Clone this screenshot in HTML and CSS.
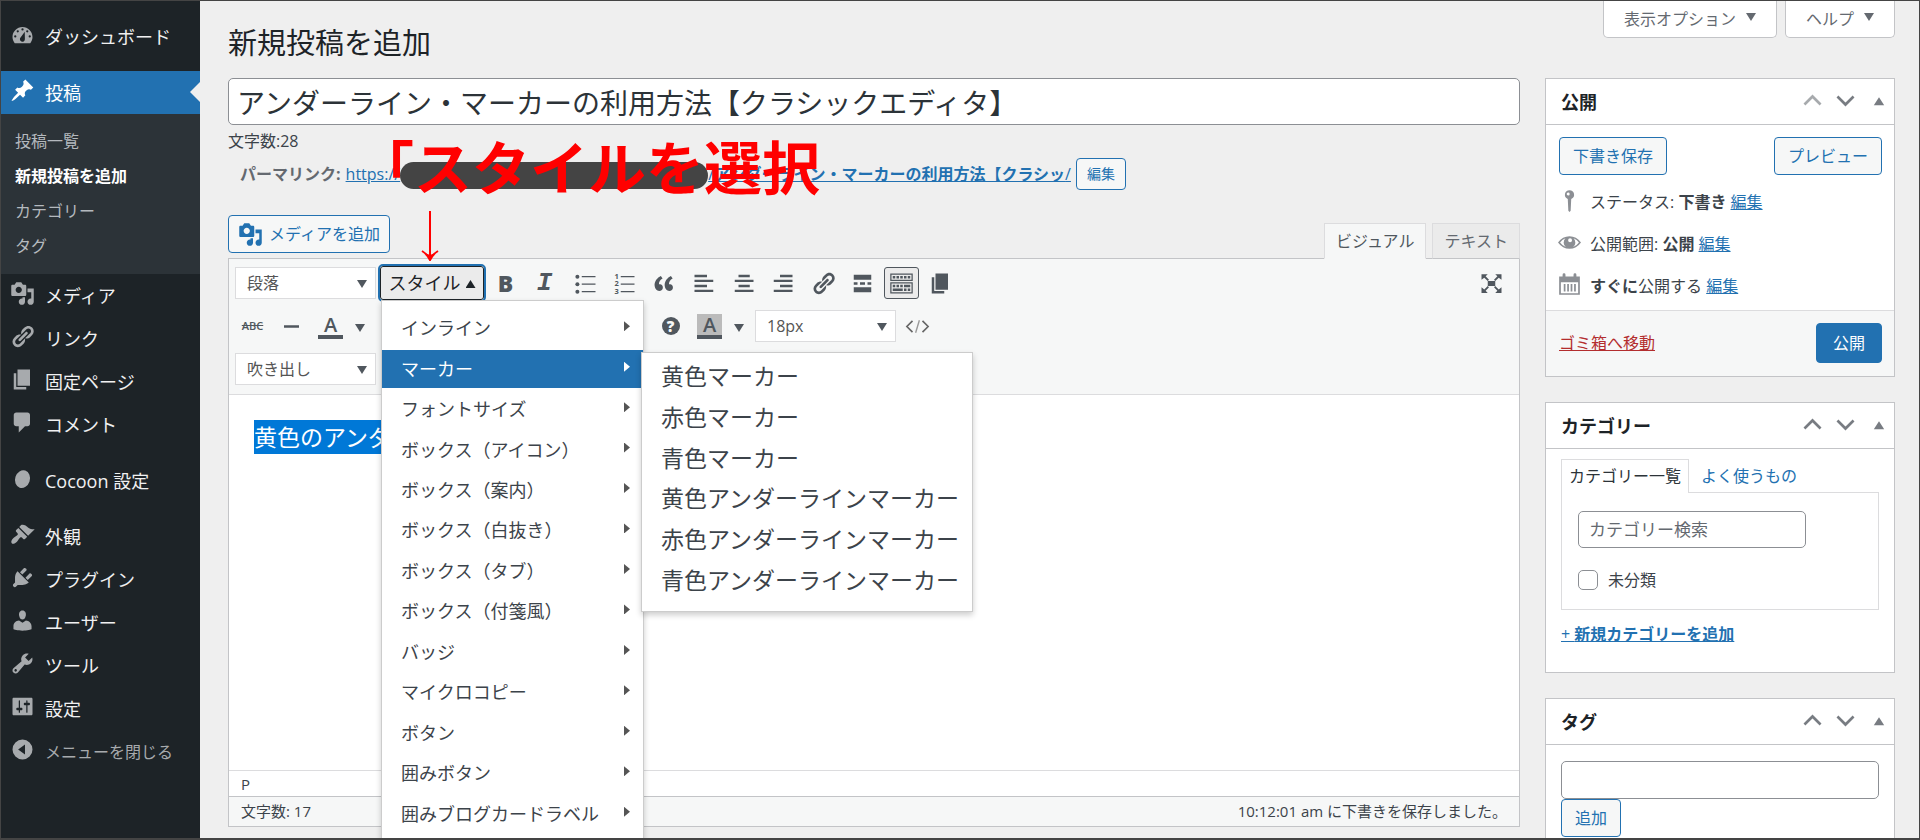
FILE: index.html
```html
<!DOCTYPE html>
<html lang="ja">
<head>
<meta charset="utf-8">
<title>新規投稿を追加</title>
<link rel="stylesheet" href="styles.css">
</head>
<body>
<svg class="defs" aria-hidden="true">
  <defs>
    <symbol id="i-media" viewBox="0 0 20 20"><path d="M13 11V4c0-.55-.45-1-1-1h-1.67L9 1H5L3.67 3H2c-.55 0-1 .45-1 1v7c0 .55.45 1 1 1h10c.55 0 1-.45 1-1zM7 4.5c1.38 0 2.5 1.12 2.5 2.5S8.38 9.5 7 9.5 4.5 8.38 4.5 7 5.62 4.5 7 4.5zM14 6h5v10.5c0 1.38-1.12 2.5-2.5 2.5S14 17.88 14 16.5s1.12-2.5 2.5-2.5c.17 0 .34.02.5.05V9h-3V6zm-4 8.05V13h2v3.5c0 1.38-1.12 2.5-2.5 2.5S7 17.88 7 16.5 8.12 14 9.5 14c.17 0 .34.02.5.05z"/></symbol>
    <symbol id="i-link" viewBox="0 0 20 20"><path d="M17.74 2.76c1.68 1.69 1.68 4.41 0 6.1l-1.53 1.52c-1.12 1.12-2.7 1.47-4.14 1.09l2.62-2.61.76-.77.76-.76c.84-.84.84-2.2 0-3.04-.84-.85-2.2-.85-3.04 0l-.77.76-3.38 3.38c-.37-1.44-.02-3.02 1.1-4.14l1.52-1.53c1.69-1.68 4.42-1.68 6.1 0zM8.59 13.43l5.34-5.34c.42-.42.42-1.1 0-1.52-.44-.43-1.13-.39-1.53 0l-5.33 5.34c-.42.42-.42 1.1 0 1.52.44.43 1.13.39 1.52 0zm-.76 2.29l4.14-4.15c.38 1.44.03 3.02-1.09 4.14l-1.52 1.53c-1.69 1.68-4.41 1.68-6.1 0-1.68-1.68-1.68-4.42 0-6.1l1.53-1.52c1.12-1.12 2.7-1.47 4.14-1.1l-4.14 4.15c-.85.84-.85 2.2 0 3.05.84.84 2.2.84 3.04 0z"/></symbol>
    <symbol id="i-page" viewBox="0 0 20 20"><path d="M6 15V2h10v13H6zm-1 1h8v2H3V5h2v11z"/></symbol>
    <symbol id="i-up" viewBox="0 0 20 20"><path d="M3 13.500l7-7 7 7" fill="none" stroke="currentColor" stroke-width="2.300"/></symbol>
    <symbol id="i-down" viewBox="0 0 20 20"><path d="M3 6.500l7 7 7-7" fill="none" stroke="currentColor" stroke-width="2.300"/></symbol>
    <symbol id="i-tri" viewBox="0 0 20 20"><path d="M3.500 16l6.500-10 6.500 10z"/></symbol>
  </defs>
</svg>
<div class="frame">
  <nav class="sidebar">
    <a class="nav-item" href="#"><svg class="icon" viewBox="0 0 20 20"><path fill-rule="evenodd" d="M3.800 17h12.400C17.300 15.600 18 13.900 18 12c0-4.400-3.600-8-8-8s-8 3.600-8 8c0 1.900.7 3.600 1.800 5zM10 5a.9.9 0 0 1 0 1.800.9.900 0 0 1 0-1.800zM6.200 6.500a.9.900 0 0 1 0 1.800.9.900 0 0 1 0-1.800zM13.800 6.500a.9.900 0 0 1 0 1.800.9.900 0 0 1 0-1.800zM4.200 10.600a.9.900 0 0 1 0 1.800.9.900 0 0 1 0-1.800zM15.800 10.600a.9.900 0 0 1 0 1.800.9.900 0 0 1 0-1.800zM11.800 7.800L11.900 13.500A2 2 0 1 1 8.600 12.200z"/></svg>ダッシュボード</a>
    <a class="nav-item current gap-before" href="#"><svg class="icon" viewBox="0 0 20 20"><path d="M10.440 3.020l1.820-1.820 6.360 6.350-1.830 1.820c-1.050-.68-2.480-.57-3.410.36l-.75.75c-.92.93-1.040 2.350-.35 3.410l-1.830 1.820-2.410-2.410-2.800 2.790c-.42.42-3.380 2.710-3.800 2.290s1.860-3.390 2.280-3.810l2.790-2.790L4.100 9.360l1.830-1.820c1.050.69 2.480.57 3.400-.36l.75-.75c.93-.92 1.050-2.350.36-3.410z"/></svg>投稿</a>
    <div class="subnav">
      <a href="#">投稿一覧</a>
      <a class="active" href="#">新規投稿を追加</a>
      <a href="#">カテゴリー</a>
      <a href="#">タグ</a>
    </div>
    <a class="nav-item" href="#"><svg class="icon"><use href="#i-media"/></svg>メディア</a>
    <a class="nav-item" href="#"><svg class="icon"><use href="#i-link"/></svg>リンク</a>
    <a class="nav-item" href="#"><svg class="icon"><use href="#i-page"/></svg>固定ページ</a>
    <a class="nav-item" href="#"><svg class="icon" viewBox="0 0 20 20"><path d="M5 2h9c1.100 0 2 .9 2 2v7c0 1.100-.9 2-2 2h-2l-5 5v-5H5c-1.100 0-2-.9-2-2V4c0-1.100.9-2 2-2z"/></svg>コメント</a>
    <a class="nav-item gap-before" href="#"><svg class="icon" viewBox="0 0 20 20"><ellipse cx="10" cy="10.500" rx="5.900" ry="7.200" transform="rotate(18 10 10.500)"/></svg>Cocoon 設定</a>
    <a class="nav-item gap-before" href="#"><svg class="icon" viewBox="0 0 20 20"><path d="M14.480 11.060L7.410 3.990l1.500-1.500c.5-.56 2.300-.47 3.510.32 1.210.8 1.430 1.280 2.910 2.100 1.180.64 2.450 1.260 4.450.85zm-.71.71L6.700 4.700 4.930 6.470c-.39.39-.39 1.020 0 1.410l1.060 1.060c.39.39.39 1.030 0 1.420-.6.6-1.430 1.110-2.210 1.690-.35.26-.7.53-1.010.84C1.430 14.230.4 16.080 1.400 17.070c.99 1 2.840-.03 4.180-1.360.31-.31.58-.66.85-1.020.57-.78 1.080-1.610 1.690-2.210.39-.39 1.020-.39 1.410 0l1.060 1.060c.39.39 1.020.39 1.410 0z"/></svg>外観</a>
    <a class="nav-item" href="#"><svg class="icon" viewBox="0 0 20 20"><path d="M13.110 4.360L9.870 7.600 8 5.730l3.240-3.240c.35-.34 1.050-.2 1.560.32.52.51.66 1.210.31 1.550zm-8 1.770l.91-1.120 9.010 9.010-1.190.84c-.71.71-2.630 1.160-3.820 1.160H6.140L4.900 17.260c-.59.59-1.540.59-2.120 0-.59-.58-.59-1.530 0-2.120l1.240-1.240v-3.880c0-1.130.4-3.190 1.090-3.890zm7.260 3.970l3.240-3.240c.34-.35 1.040-.21 1.550.31.52.51.66 1.210.31 1.550l-3.240 3.250z"/></svg>プラグイン</a>
    <a class="nav-item" href="#"><svg class="icon" viewBox="0 0 20 20"><path d="M10 9.250c-2.270 0-2.730-3.440-2.730-3.440C7 4.020 7.820 2 9.970 2c2.160 0 2.980 2.020 2.710 3.810 0 0-.41 3.440-2.680 3.440zm0 2.570L12.720 10c2.390 0 4.520 2.330 4.520 4.530v2.490s-3.650 1.130-7.240 1.130c-3.650 0-7.240-1.130-7.240-1.130v-2.490c0-2.250 1.940-4.480 4.470-4.480z"/></svg>ユーザー</a>
    <a class="nav-item" href="#"><svg class="icon" viewBox="0 0 20 20"><path d="M16.680 9.770c-1.340 1.340-3.300 1.670-4.950.99l-5.410 6.520c-.99.99-2.590.99-3.580 0s-.99-2.590 0-3.570l6.520-5.420c-.68-1.650-.35-3.610.99-4.950 1.280-1.280 3.120-1.620 4.720-1.060l-2.890 2.890 2.820 2.820 2.860-2.870c.53 1.580.18 3.390-1.080 4.650zM3.810 16.210c.4.39 1.040.39 1.430 0 .4-.4.4-1.040 0-1.430-.39-.4-1.030-.4-1.430 0-.39.39-.39 1.030 0 1.430z"/></svg>ツール</a>
    <a class="nav-item" href="#"><svg class="icon" viewBox="0 0 20 20"><path d="M18 16V4c0-.55-.45-1-1-1H3c-.55 0-1 .45-1 1v12c0 .55.45 1 1 1h14c.55 0 1-.45 1-1zM8 11h1c.55 0 1 .45 1 1s-.45 1-1 1H8v1.500c0 .28-.22.5-.5.5s-.5-.22-.5-.5V13H6c-.55 0-1-.45-1-1s.45-1 1-1h1V5.500c0-.28.22-.5.5-.5s.5.22.5.5V11zm5-2h-1c-.55 0-1-.45-1-1s.45-1 1-1h1V5.500c0-.28.22-.5.5-.5s.5.22.5.5V7h1c.55 0 1 .45 1 1s-.45 1-1 1h-1v5.500c0 .28-.22.5-.5.5s-.5-.22-.5-.5V9z"/></svg>設定</a>
    <button class="nav-item collapse" type="button"><svg class="icon" viewBox="0 0 20 20"><path fill-rule="evenodd" d="M10 2a8 8 0 1 0 0 16 8 8 0 0 0 0-16zM12 6v8L6.500 10z"/></svg>メニューを閉じる</button>
  </nav>

  <div class="page">
    <header class="page-head">
      <h1>新規投稿を追加</h1>
      <div class="screen-meta">
        <button type="button">表示オプション<i class="caret"></i></button>
        <button type="button">ヘルプ<i class="caret"></i></button>
      </div>
    </header>

    <div class="columns">
      <main class="main">
        <input class="title-input" type="text" aria-label="タイトル" value="アンダーライン・マーカーの利用方法【クラシックエディタ】">
        <p class="title-count">文字数:28</p>
        <div class="permalink">
          <b>パーマリンク:</b>
          <a href="#">https://<span class="masked"></span>/<b>アンダーライン・マーカーの利用方法【クラシッ</b>/</a>
          <button class="btn small" type="button">編集</button>
          <div class="callout">「スタイルを選択
            <svg class="callout-arrow" viewBox="0 0 18 50"><path d="M9 0V48M1 40Q6 43 9 49Q12 43 17 40" fill="none" stroke="#f00" stroke-width="2"/><path d="M4 42l5 2 5-2-5 8z" fill="#f00"/></svg>
          </div>
        </div>
        <div class="editor-tools">
          <button class="btn media" type="button"><svg class="icon"><use href="#i-media"/></svg>メディアを追加</button>
          <div class="tabs">
            <button class="tab on" type="button">ビジュアル</button>
            <button class="tab" type="button">テキスト</button>
          </div>
        </div>

        <div class="editor">
          <div class="toolbar">
            <div class="row">
              <div class="group">
                <span class="pick"><select aria-label="段落"><option>段落</option></select></span>
                <div class="style-wrap">
                  <button class="style-btn" type="button">スタイル<i class="caret up"></i></button>
                  <div class="menu">
                    <button type="button">インライン</button>
                    <button class="hover" type="button">マーカー</button>
                    <button type="button">フォントサイズ</button>
                    <button type="button">ボックス（アイコン）</button>
                    <button type="button">ボックス（案内）</button>
                    <button type="button">ボックス（白抜き）</button>
                    <button type="button">ボックス（タブ）</button>
                    <button type="button">ボックス（付箋風）</button>
                    <button type="button">バッジ</button>
                    <button type="button">マイクロコピー</button>
                    <button type="button">ボタン</button>
                    <button type="button">囲みボタン</button>
                    <button type="button">囲みブログカードラベル</button>
                  </div>
                  <div class="submenu">
                    <button type="button">黄色マーカー</button>
                    <button type="button">赤色マーカー</button>
                    <button type="button">青色マーカー</button>
                    <button type="button">黄色アンダーラインマーカー</button>
                    <button type="button">赤色アンダーラインマーカー</button>
                    <button type="button">青色アンダーラインマーカー</button>
                  </div>
                </div>
                <button class="tool bold" type="button">B</button>
                <button class="tool italic" type="button">I</button>
              </div>
              <div class="group">
                <button class="tool" type="button" aria-label="箇条書き"><svg class="icon" viewBox="0 0 20 20"><circle cx="3.500" cy="4.500" r="1.600"/><circle cx="3.500" cy="10.500" r="1.600"/><circle cx="3.500" cy="16.500" r="1.600"/><path d="M7 4h11v1H7zM7 10h11v1H7zM7 16h11v1H7z"/></svg></button>
                <button class="tool" type="button" aria-label="番号付き"><svg class="icon" viewBox="0 0 20 20"><path d="M7 4h11v1H7zM7 10h11v1H7zM7 16h11v1H7z"/><text class="num" x="2" y="6">1</text><text class="num" x="2" y="12">2</text><text class="num" x="2" y="18">3</text></svg></button>
                <button class="tool" type="button" aria-label="引用"><svg class="icon" viewBox="0 0 20 20"><path d="M9.490 13.220c0-.74-.2-1.380-.61-1.900-.62-.78-1.830-.88-2.530-.72-.29-1.650 1.110-3.750 2.920-4.650L7.880 4c-2.730 1.300-5.420 4.280-4.960 8.050C3.210 14.430 4.590 16 6.540 16c.85 0 1.560-.25 2.120-.75s.83-1.180.83-2.030zm8.050 0c0-.74-.2-1.380-.61-1.900-.63-.78-1.830-.88-2.530-.72-.29-1.650 1.110-3.750 2.920-4.650L15.930 4c-2.730 1.300-5.410 4.280-4.950 8.050.29 2.380 1.660 3.950 3.610 3.950.85 0 1.560-.25 2.120-.75s.83-1.180.83-2.030z"/></svg></button>
              </div>
              <div class="group">
                <button class="tool" type="button" aria-label="左寄せ"><svg class="icon" viewBox="0 0 20 20"><path d="M2 3h10v2H2zM2 7h15v1.800H2zM2 11h10v2H2zM2 15h15v1.800H2z"/></svg></button>
                <button class="tool" type="button" aria-label="中央寄せ"><svg class="icon" viewBox="0 0 20 20"><path d="M6 3h9v2H6zM3 7h15v1.800H3zM6 11h9v2H6zM3 15h15v1.800H3z"/></svg></button>
                <button class="tool" type="button" aria-label="右寄せ"><svg class="icon" viewBox="0 0 20 20"><path d="M8 3h10v2H8zM3 7h15v1.800H3zM8 11h10v2H8zM3 15h15v1.800H3z"/></svg></button>
              </div>
              <div class="group">
                <button class="tool" type="button" aria-label="リンク"><svg class="icon"><use href="#i-link"/></svg></button>
                <button class="tool" type="button" aria-label="続きを読む"><svg class="icon" viewBox="0 0 20 20"><path d="M17 7V3H3v4h14zM6 11V9H3v2h3zm6 0V9H8v2h4zm5 0V9h-3v2h3zm0 6v-4H3v4h14z"/></svg></button>
                <button class="tool pressed" type="button" aria-label="ツールバー切り替え"><svg class="icon" viewBox="0 0 20 20"><path d="M19 2v6H1V2h18zm-1 5V3H2v4h16zM5 4v2H3V4h2zm3 0v2H6V4h2zm3 0v2H9V4h2zm3 0v2h-2V4h2zm3 0v2h-2V4h2zm2 5v9H1V9h18zm-1 8v-7H2v7h16zM5 11v2H3v-2h2zm3 0v2H6v-2h2zm3 0v2H9v-2h2zm6 0v2h-5v-2h5zm-6 3v2H3v-2h8zm3 0v2h-2v-2h2zm3 0v2h-2v-2h2z"/></svg></button>
                <button class="tool" type="button" aria-label="ページ"><svg class="icon"><use href="#i-page"/></svg></button>
              </div>
              <button class="tool expand" type="button" aria-label="集中執筆モード"><svg class="icon" viewBox="0 0 20 20"><path d="M7 8h6v4H7zM2 2.500h5L5.300 4.200 8 7 7 8 4.200 5.300 2 7zM18 2.500h-5l1.700 1.700L12 7l1 1 2.800-2.700L18 7zM2 17.500h5l-1.700-1.700L8 13l-1-1-2.800 2.700L2 13zM18 17.500h-5l1.700-1.700L12 13l1-1 2.800 2.700L18 13z"/></svg></button>
            </div>

            <div class="row">
              <div class="group">
                <button class="tool strike" type="button">ABC</button>
                <button class="tool" type="button" aria-label="横線"><svg class="icon" viewBox="0 0 20 20"><path d="M4 9h12v2H4z"/></svg></button>
                <span class="split"><button class="tool" type="button"><span class="swatch">A</span></button><button class="more" type="button" aria-label="文字色"><i class="caret"></i></button></span>
              </div>
              <div class="group">
                <button class="tool" type="button" aria-label="貼り付け"></button>
                <button class="tool" type="button" aria-label="書式設定をクリア"></button>
                <button class="tool" type="button" aria-label="特殊文字"></button>
                <button class="tool" type="button" aria-label="インデントを減らす"></button>
                <button class="tool" type="button" aria-label="インデントを増やす"></button>
                <button class="tool" type="button" aria-label="取り消し"></button>
                <button class="tool" type="button" aria-label="やり直し"></button>
              </div>
              <div class="group">
                <button class="tool" type="button"><span class="help">?</span></button>
                <span class="split"><button class="tool" type="button"><span class="swatch back">A</span></button><button class="more" type="button" aria-label="背景色"><i class="caret"></i></button></span>
                <span class="pick"><select aria-label="フォントサイズ"><option>18px</option></select></span>
                <button class="tool" type="button" aria-label="コード"><svg class="icon" viewBox="0 0 20 20"><path d="M6 5.500L1.500 10 6 14.500M14 5.500l4.500 4.500-4.500 4.500" fill="none" stroke="#666" stroke-width="1.300"/><path d="M11.500 5l-3 10" fill="none" stroke="#999" stroke-width="1.100"/></svg></button>
              </div>
            </div>

            <div class="row">
              <span class="pick"><select aria-label="吹き出し"><option>吹き出し</option></select></span>
            </div>
          </div>
          <div class="canvas"><p><mark>黄色のアンダーラインマーカーです。</mark></p></div>
          <div class="path">P</div>
          <div class="status"><span>文字数: 17</span><span>10:12:01 am に下書きを保存しました。</span></div>
        </div>
      </main>

      <aside class="side">
        <section class="box">
          <div class="box-head"><h2>公開</h2><span class="order"><svg class="dim"><use href="#i-up"/></svg><svg><use href="#i-down"/></svg><svg><use href="#i-tri"/></svg></span></div>
          <div class="publish">
            <div class="between"><button class="btn" type="button">下書き保存</button><button class="btn" type="button">プレビュー</button></div>
            <p><svg class="icon" viewBox="0 0 20 20"><path fill-rule="evenodd" d="M10 1a4 4 0 0 1 1.500 7.700L11 19l-1 1-1-1-.5-10.300A4 4 0 0 1 10 1zM8.800 3a1.300 1.300 0 1 0 .1 2.600A1.300 1.300 0 0 0 8.800 3z"/></svg><span>ステータス: <b>下書き</b> <a href="#">編集</a></span></p>
            <p><svg class="icon" viewBox="0 0 20 20"><path fill-rule="evenodd" d="M0 10Q4 4.500 10 4.500T20 10Q16 15.500 10 15.500T0 10zM1.800 10Q4 13 6.800 13.900A5 5 0 0 1 6.500 6.300Q3.500 7.500 1.800 10zM18.200 10Q16.500 7.500 13.500 6.300A5 5 0 0 1 13.200 13.900Q16 13 18.200 10zM10.500 6.300a1.700 1.700 0 1 0 1.700 1.700 1.700 1.700 0 0 0-1.700-1.700z"/></svg><span>公開範囲: <b>公開</b> <a href="#">編集</a></span></p>
            <p><svg class="icon" viewBox="0 0 20 20"><path fill-rule="evenodd" d="M1 3h3V1.500a1 1 0 0 1 2.500 0V3h7V1.500a1 1 0 0 1 2.500 0V3h3v16H1zM2.500 8v9.500h15V8zM5 9.500h1.500V16H5zM8 9.500h1.500V16H8zM11 9.500h1.500V16H11zM14 9.500h1.500V16H14z"/></svg><span><b>すぐに</b>公開する <a href="#">編集</a></span></p>
          </div>
          <div class="publish-foot"><a href="#">ゴミ箱へ移動</a><button class="btn primary" type="button">公開</button></div>
        </section>

        <section class="box">
          <div class="box-head"><h2>カテゴリー</h2><span class="order"><svg><use href="#i-up"/></svg><svg><use href="#i-down"/></svg><svg><use href="#i-tri"/></svg></span></div>
          <div class="category">
            <div class="cat-tabs"><a class="on" href="#">カテゴリー一覧</a><a href="#">よく使うもの</a></div>
            <div class="cat-panel">
              <input class="field" type="text" aria-label="カテゴリー検索" placeholder="カテゴリー検索">
              <label><input type="checkbox">未分類</label>
            </div>
            <a class="add-cat" href="#">+ <b>新規カテゴリーを追加</b></a>
          </div>
        </section>

        <section class="box">
          <div class="box-head"><h2>タグ</h2><span class="order"><svg><use href="#i-up"/></svg><svg><use href="#i-down"/></svg><svg><use href="#i-tri"/></svg></span></div>
          <div class="tags">
            <input class="field" type="text" aria-label="タグ">
            <button class="btn" type="button">追加</button>
          </div>
        </section>
      </aside>
    </div>
  </div>
</div>
</body>
</html>
```

FILE: styles.css
```css
* { box-sizing: border-box; }

body {
  margin: 0;
  font: 16px/24px "Open Sans", "Noto Sans CJK JP", sans-serif;
  color: #3c434a;
  background: #f0f0f1;
}

button, input, select { font: inherit; color: inherit; margin: 0; }
button { padding: 0; border: 0; background: none; white-space: nowrap; }
h1, h2, p { margin: 0; }
a { color: #2271b1; }
svg { fill: currentColor; }
.defs { display: block; width: 0; height: 0; position: absolute; }
.icon { width: 25px; height: 25px; flex: none; }

.caret {
  display: inline-block;
  width: 10px;
  height: 8px;
  background: currentColor;
  clip-path: polygon(0 0, 100% 0, 50% 100%);
}
.caret.up { clip-path: polygon(50% 0, 100% 100%, 0 100%); }

.frame {
  display: flex;
  height: 100vh;
  overflow: hidden;
  border: 1px solid #444;
  border-bottom-width: 2px;
  background: #efefef;
}

/* Admin menu */
.sidebar {
  flex: none;
  width: 199px;
  padding-top: 14px;
  background: #1d2327;
}
.nav-item {
  display: flex;
  align-items: center;
  gap: 10px;
  width: 100%;
  height: 43px;
  padding-left: 9px;
  font-size: 18px;
  color: #f0f0f1;
  text-decoration: none;
}
.nav-item .icon { color: #a7aaad; margin-bottom: 4px; }
.gap-before { margin-top: 13px; }
.nav-item.current { position: relative; background: #2271b1; color: #fff; }
.nav-item.current .icon { color: #fff; }
.nav-item.current::after {
  content: "";
  position: absolute;
  right: 0;
  top: 11px;
  width: 10px;
  height: 20px;
  background: #efefef;
  clip-path: polygon(100% 0, 100% 100%, 0 50%);
}
.subnav { padding: 10px 0; background: #2c3338; }
.subnav a {
  display: block;
  padding-left: 14px;
  line-height: 35px;
  color: #b4b9be;
  text-decoration: none;
}
.subnav a.active { color: #fff; font-weight: 700; }
.nav-item.collapse { font-size: 16px; color: #a7aaad; }

/* Page */
.page { flex: 1; min-width: 0; padding: 0 24px 0 28px; }
.page-head { display: flex; justify-content: space-between; height: 77px; }
h1 {
  padding-top: 22px;
  font-size: 29px;
  line-height: 40px;
  font-weight: 400;
  color: #1d2327;
}
.screen-meta { display: flex; gap: 8px; align-items: flex-start; }
.screen-meta button {
  height: 37px;
  padding: 0 20px;
  border: 1px solid #c3c4c7;
  border-top: 0;
  border-radius: 0 0 5px 5px;
  background: #fff;
  color: #646970;
}
.screen-meta .caret { margin: 0 0 4px 10px; }
.columns { display: flex; gap: 25px; }
.main { flex: 1; min-width: 0; }
.side { flex: none; width: 350px; display: flex; flex-direction: column; gap: 25px; }

.btn {
  height: 38px;
  padding: 0 13px;
  border: 1px solid #2271b1;
  border-radius: 4px;
  background: #f6f7f7;
  color: #2271b1;
}
.btn.small { height: 32px; padding: 0 10px; font-size: 14px; }
.btn.primary { height: 40px; padding: 0 16px; background: #2271b1; color: #fff; }

.title-input {
  display: block;
  width: 100%;
  height: 47px;
  padding: 0 8px;
  border: 1px solid #8c8f94;
  border-radius: 5px;
  background: #fff;
  font-size: 28px;
  color: #2c3338;
}
.title-count { padding-top: 4px; }
.permalink {
  position: relative;
  display: flex;
  align-items: center;
  gap: 5px;
  height: 32px;
  margin-top: 5px;
  padding-left: 12px;
  color: #646970;
  white-space: nowrap;
}
.masked {
  display: inline-block;
  width: 308px;
  height: 27px;
  margin: -4px 0;
  border-radius: 14px;
  background: #444;
  vertical-align: middle;
}
.callout {
  position: absolute;
  left: 128px;
  top: -20px;
  font-size: 58px;
  line-height: 60px;
  font-weight: 700;
  color: #f00;
}
.callout-arrow { position: absolute; left: 65px; top: 73px; width: 18px; height: 50px; }

.editor-tools { display: flex; justify-content: space-between; align-items: flex-start; padding-top: 25px; }
.btn.media { display: flex; align-items: center; gap: 6px; padding: 0 9px; margin-bottom: 5px; }
.tabs { display: flex; gap: 6px; align-self: flex-end; position: relative; }
.tab {
  height: 36px;
  padding: 0 11px;
  border: 1px solid #dcdcde;
  border-bottom-color: #c3c4c7;
  background: #ebebeb;
  color: #646970;
  margin-bottom: -1px;
}
.tab.on { background: #f6f7f7; border-bottom-color: #f6f7f7; color: #50575e; }

/* Editor */
.editor { border: 1px solid #c3c4c7; }
.toolbar {
  display: flex;
  flex-direction: column;
  gap: 11px;
  padding: 8px 6px;
  border-bottom: 1px solid #dcdcde;
  background: #f6f7f7;
  color: #50575e;
}
.row { display: flex; align-items: center; gap: 6px; height: 32px; }
.row:last-child { margin-bottom: 1px; }
.group { display: flex; align-items: center; gap: 4px; }
.pick { position: relative; display: block; }
.pick select {
  display: block;
  appearance: none;
  width: 141px;
  height: 32px;
  padding: 0 11px;
  border: 1px solid #dcdcde;
  border-radius: 0;
  background: #fff;
  color: #555;
}
.pick::after {
  content: "";
  position: absolute;
  right: 9px;
  top: 13px;
  width: 10px;
  height: 8px;
  background: #50575e;
  clip-path: polygon(0 0, 100% 0, 50% 100%);
  pointer-events: none;
}
.tool {
  display: flex;
  align-items: center;
  justify-content: center;
  width: 35px;
  height: 32px;
}
.tool.pressed { border: 1px solid #50575e; border-radius: 3px; background: #ebebeb; }
.bold { font-size: 23px; font-weight: 800; }
.italic { font: italic 700 26px "Liberation Mono", monospace; }
.num { font: 700 6px "Open Sans", sans-serif; }
.expand { margin: 0 4px 0 auto; }
.strike { font-size: 11px; font-weight: 600; text-decoration: line-through; }
.split { display: flex; }
.more { width: 24px; }
.swatch {
  width: 25px;
  height: 25px;
  border-bottom: 4px solid #50575e;
  font-size: 20px;
  line-height: 21px;
  font-weight: 600;
}
.swatch.back { background: #bbb; }
.help {
  width: 18px;
  height: 18px;
  border-radius: 9px;
  background: #50575e;
  color: #f6f7f7;
  font-size: 15px;
  line-height: 18px;
  font-weight: 800;
}

.style-wrap { position: relative; z-index: 2; }
.style-btn {
  width: 104px;
  height: 34px;
  border: 1px solid #1d2327;
  border-radius: 3px;
  outline: 2px solid #2271b1;
  background: #ebebeb;
  font-size: 18px;
  color: #1d2327;
}
.style-btn .caret { margin: 0 0 2px 5px; }
.menu, .submenu {
  position: absolute;
  display: grid;
  align-items: center;
  border: 1px solid #ccc;
  background: #fff;
  box-shadow: 0 3px 6px #0003;
}
.menu { left: 1px; top: 34px; width: 263px; height: 554px; padding: 7px 0 19px; }
.menu button {
  position: relative;
  height: 38px;
  padding-left: 19px;
  text-align: left;
  font-size: 18px;
  color: #3c434a;
}
.menu button::after {
  content: "";
  position: absolute;
  right: 13px;
  top: 12px;
  width: 6px;
  height: 10px;
  background: #555;
  clip-path: polygon(0 0, 100% 50%, 0 100%);
}
.menu .hover { background: #2271b1; color: #fff; }
.menu .hover::after { background: #fff; }
.submenu { left: 261px; top: 86px; width: 332px; height: 260px; padding: 3px 0 11px; }
.submenu button { padding-left: 19px; text-align: left; font-size: 23px; line-height: 38px; color: #3c434a; }

.canvas { height: 375px; padding: 25px; background: #fff; font-size: 23px; line-height: 34px; }
.canvas mark { display: inline-block; background: #0078d7; color: #fff; }
.path { height: 26px; padding-left: 12px; border-top: 1px solid #dcdcde; background: #fff; font-size: 15px; line-height: 26px; }
.status {
  display: flex;
  justify-content: space-between;
  padding: 0 12px;
  border-top: 1px solid #c3c4c7;
  background: #f6f7f7;
  font-size: 15px;
  line-height: 29px;
}

/* Meta boxes */
.box { border: 1px solid #c3c4c7; background: #fff; }
.box-head {
  display: flex;
  align-items: center;
  justify-content: space-between;
  height: 46px;
  padding: 0 7px 0 15px;
  border-bottom: 1px solid #c3c4c7;
}
.box-head h2 { font-size: 18px; line-height: 24px; font-weight: 700; color: #1d2327; }
.order { display: flex; gap: 10px; padding-bottom: 3px; color: #787c82; }
.order svg { width: 23px; height: 23px; }
.order svg:last-child { width: 16px; height: 23px; margin-left: 4px; }
.order .dim { color: #a7aaad; }
.between { display: flex; justify-content: space-between; margin-bottom: 6px; }
.publish { padding: 12px 12px 3px 13px; }
.publish p { display: flex; align-items: center; gap: 9px; height: 42px; margin-left: -1px; }
.publish .icon { width: 23px; height: 23px; color: #8c8f94; margin-bottom: 4px; }
.publish-foot {
  display: flex;
  align-items: center;
  justify-content: space-between;
  padding: 12px 12px 13px 13px;
  border-top: 1px solid #dcdcde;
  background: #f6f7f7;
}
.publish-foot a { color: #b32d2e; }
.category { padding: 10px 15px 26px; }
.cat-tabs { display: flex; }
.cat-tabs a { padding: 4px 7px; border: 1px solid transparent; border-bottom: 0; text-decoration: none; }
.cat-tabs .on {
  position: relative;
  margin-bottom: -1px;
  border-color: #dcdcde;
  background: #fff;
  color: #2c3338;
}
.cat-tabs a + a { padding-left: 11px; }
.cat-panel { padding: 18px 16px 17px; border: 1px solid #dcdcde; }
.field {
  display: block;
  width: 228px;
  height: 37px;
  padding: 0 10px;
  border: 1px solid #8c8f94;
  border-radius: 5px;
  background: #fff;
  font-size: 17px;
}
.field::placeholder { color: #646970; opacity: 1; }
.cat-panel label { display: flex; align-items: center; gap: 10px; margin-top: 20px; }
.cat-panel label input {
  appearance: none;
  width: 20px;
  height: 20px;
  border: 1px solid #8c8f94;
  border-radius: 5px;
  background: #fff;
}
.add-cat { display: inline-block; margin-top: 12px; }
.tags { padding: 16px 15px; }
.tags .field { width: 100%; height: 38px; }
```
